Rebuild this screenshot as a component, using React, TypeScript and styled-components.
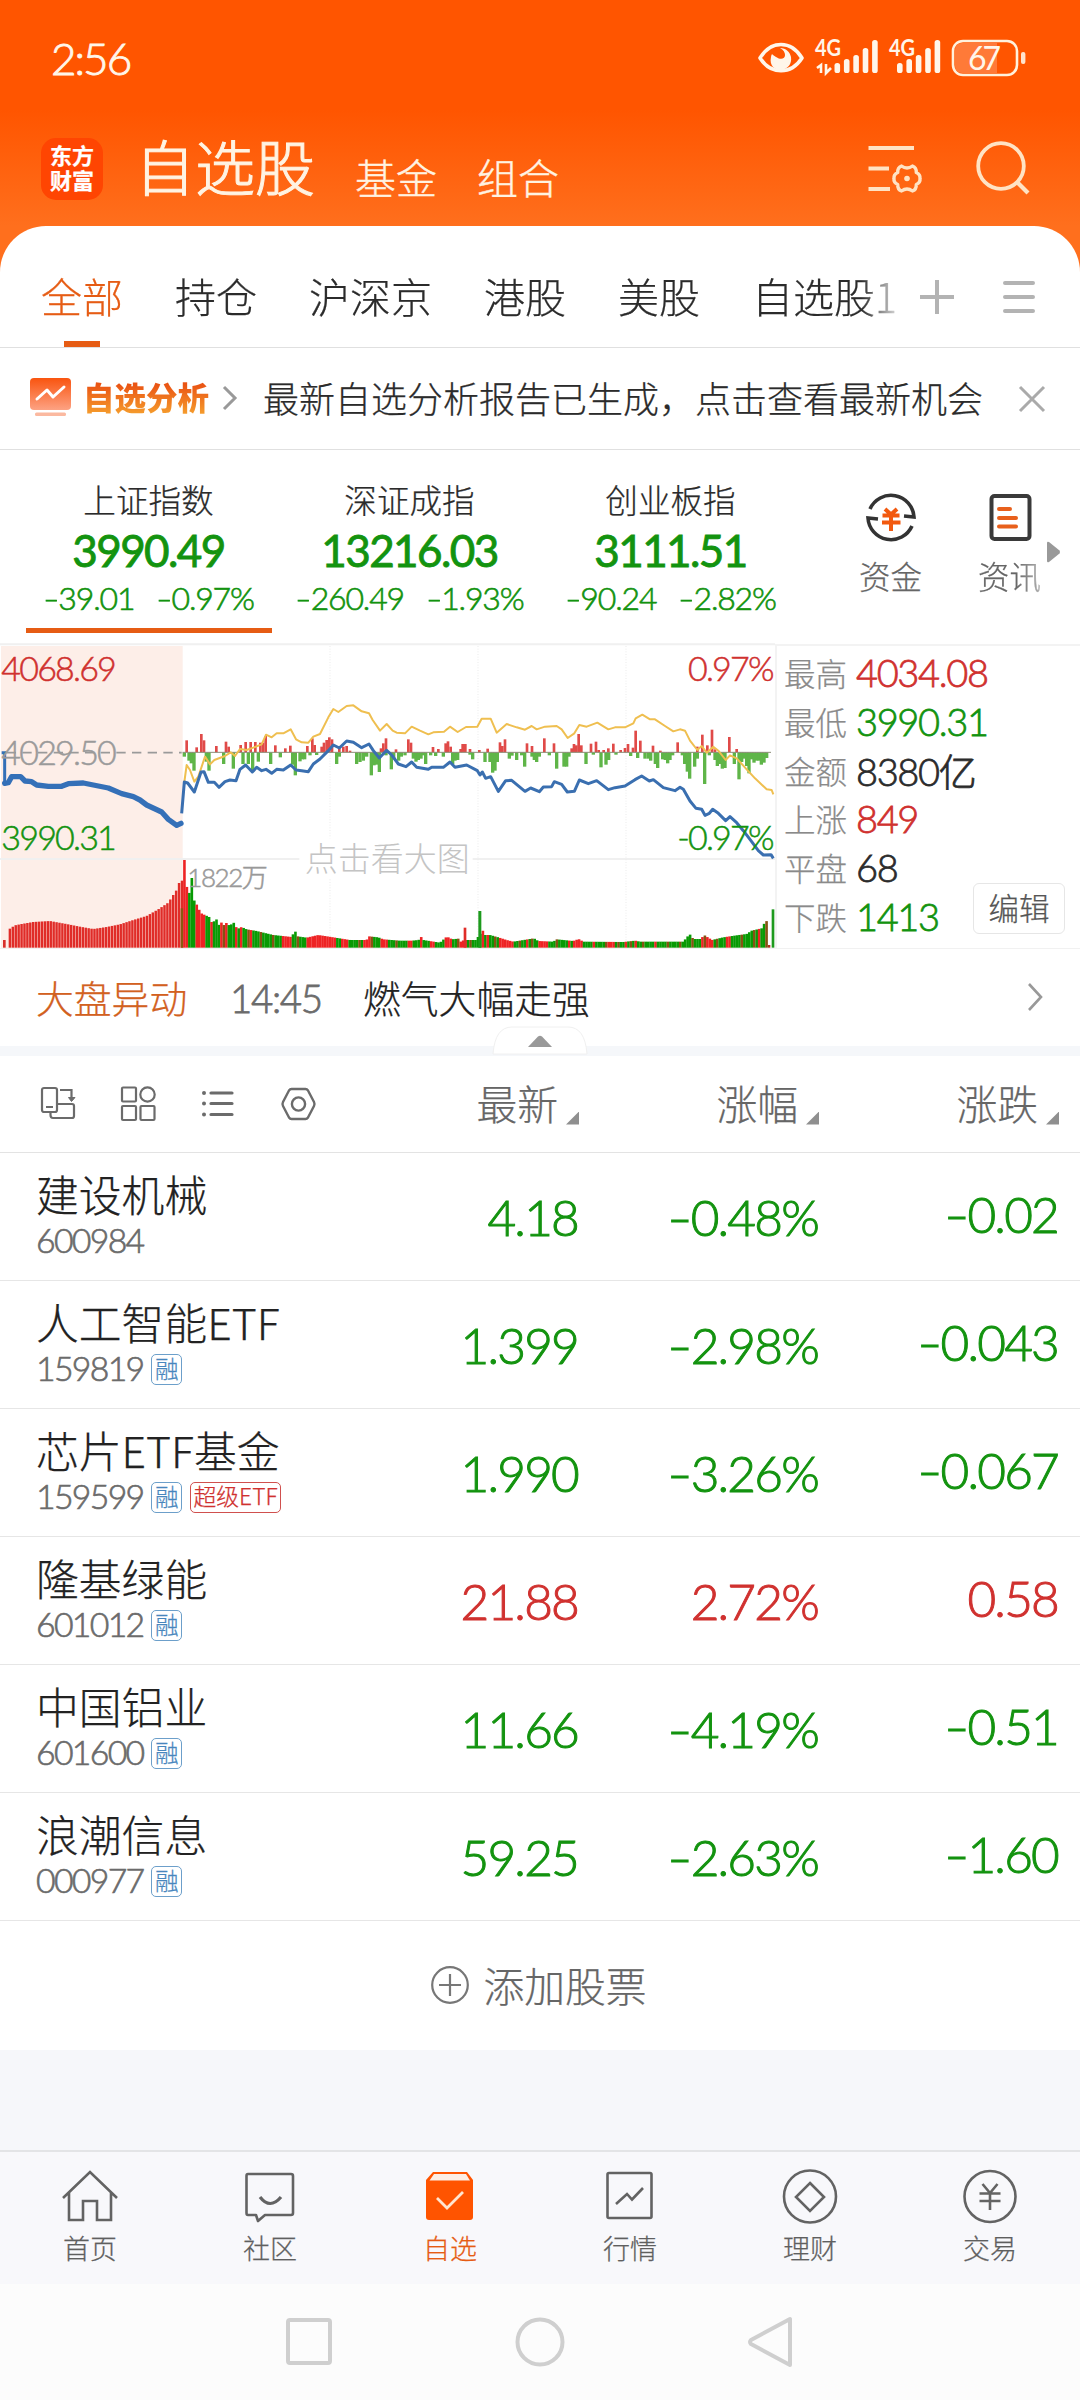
import React from "react";
import styled, { createGlobalStyle } from "styled-components";

const UP = "#d0312f";
const DOWN = "#13930f";
const ORANGE = "#e65c14";

const Global = createGlobalStyle`
  * { box-sizing: border-box; }
  body { margin: 0; background: #fff; }
  svg { display: block; flex: none; overflow: visible; }
`;

const Screen = styled.div`
  width: 1080px;
  height: 2400px;
  overflow: hidden;
  display: flex;
  flex-direction: column;
  background: linear-gradient(180deg, #ff5500 0, #ff5500 110px, #ff6f1d 226px, #ff6f1d 280px);
  font-family: "Noto Sans CJK SC", sans-serif;
  font-weight: 300;
  -webkit-text-stroke: 0.25px;
  color: #2b2b2b;
  white-space: nowrap;
`;

const Num = styled.span<{ $size: number; $color?: string; $bold?: boolean; $track?: number }>`
  font-family: Lato, "Noto Sans CJK SC", sans-serif;
  font-size: ${(p) => p.$size}px;
  font-weight: ${(p) => (p.$bold ? 400 : 300)};
  -webkit-text-stroke: 0.02em;
  letter-spacing: ${(p) => p.$track ?? -0.036}em;
  color: ${(p) => p.$color ?? "inherit"};
`;
const Minus = styled.span`
  display: inline-block;
  transform: scaleX(1.4);
  transform-origin: left;
  margin-right: 0.14em;
`;
const Signed = ({ value }: { value: string }) =>
  value.startsWith("-") ? <><Minus>-</Minus>{value.slice(1)}</> : <>{value}</>;

/* ---------- status bar & header ---------- */
const StatusBar = styled.div`
  height: 116px;
  flex: none;
  padding: 0 54px 0 51px;
  display: flex;
  align-items: center;
  justify-content: space-between;
  color: #fff6ea;
`;
const Header = styled.header`
  height: 110px;
  flex: none;
  padding: 0 48px 0 41px;
  display: flex;
  align-items: center;
  color: #fff3e2;
`;
const Logo = styled.div`
  width: 62px;
  height: 62px;
  margin: -4px 32px 0 0;
  padding-bottom: 4px;
  border-radius: 15px;
  background: #ff4502;
  color: #fff;
  display: flex;
  flex-direction: column;
  align-items: center;
  justify-content: center;
  font-size: 22px;
  line-height: 25px;
  font-weight: 700;
`;
const HeaderTabs = styled.nav`
  display: flex;
  align-items: baseline;
  margin-top: -12px;
  flex: 1;
`;
const HeaderTab = styled.span<{ $active?: boolean }>`
  font-size: ${(p) => (p.$active ? 60 : 41)}px;
  line-height: ${(p) => (p.$active ? 80 : 60)}px;
  font-weight: 300;
  -webkit-text-stroke: ${(p) => (p.$active ? 1 : 0.4)}px;
  margin-right: 40px;
  transform: translateY(${(p) => (p.$active ? 0 : 3)}px);
`;
const HeaderIcons = styled.div`
  display: flex;
  gap: 52px;
  margin-top: -6px;
`;

/* ---------- group tabs ---------- */
const Sheet = styled.main`
  flex: 1;
  display: flex;
  flex-direction: column;
  background: #fff;
  border-radius: 46px 46px 0 0;
  overflow: hidden;
`;
const GroupTabs = styled.div`
  height: 122px;
  flex: none;
  border-bottom: 1px solid #e0e0e0;
  padding: 0 43px 0 41px;
  display: flex;
  align-items: stretch;
`;
const GroupScroller = styled.div`
  width: 855px;
  overflow: hidden;
  display: flex;
  gap: 52px;
  mask-image: linear-gradient(90deg, #000 820px, transparent 864px);
`;
const GroupTab = styled.span<{ $active?: boolean }>`
  font-size: 41px;
  line-height: 138px;
  height: 121px;
  color: ${(p) => (p.$active ? ORANGE : "#2b2b2b")};
  background: ${(p) => (p.$active ? `linear-gradient(${ORANGE}, ${ORANGE}) 50% 100% / 36px 6px no-repeat` : "none")};
`;
const GroupActions = styled.div`
  margin-left: auto;
  display: flex;
  align-items: center;
  gap: 46px;
  padding-top: 20px;
`;

/* ---------- analysis banner ---------- */
const Banner = styled.div`
  height: 102px;
  flex: none;
  border-bottom: 1px solid #e0e0e0;
  padding: 0 33px 2px 29px;
  display: flex;
  align-items: center;
`;
const BannerTitle = styled.span`
  margin: 0 13px 0 12px;
  padding-bottom: 3px;
  font-size: 31.5px;
  line-height: 60px;
  font-weight: 900;
  background: linear-gradient(180deg, #ea5514 30%, #f59a2c 75%);
  -webkit-background-clip: text;
  background-clip: text;
  color: transparent;
  -webkit-text-stroke: 0;
`;
const BannerText = styled.span`
  font-size: 36px;
  line-height: 60px;
  padding-bottom: 2px;
  margin-left: 25px;
  flex: 1;
`;

/* ---------- indices ---------- */
const IndexRow = styled.section`
  height: 194px;
  flex: none;
  display: flex;
  padding-left: 18px;
`;
const IndexCard = styled.div<{ $active?: boolean }>`
  width: 261px;
  padding-top: 26px;
  display: flex;
  flex-direction: column;
  align-items: center;
  background: ${(p) => (p.$active ? `linear-gradient(${ORANGE}, ${ORANGE}) 50% 178px / 246px 5px no-repeat` : "none")};
`;
const IndexName = styled.span`
  font-size: 32.6px;
  line-height: 46px;
`;
const IndexValue = styled.div`
  display: flex;
  line-height: 56px;
  -webkit-text-stroke: 0.03em;
`;
const IndexChange = styled.div`
  display: flex;
  gap: 22px;
  line-height: 40px;
`;
const Shortcuts = styled.div`
  margin-left: 30px;
  display: flex;
  padding-top: 42px;
`;
const Shortcut = styled.div`
  width: 119px;
  display: flex;
  flex-direction: column;
  align-items: center;
  color: #666;
  font-size: 31.5px;
  line-height: 48px;
  gap: 7px;
`;
const Faded = styled.span`
  mask-image: linear-gradient(90deg, #000 60%, rgba(0, 0, 0, 0.5) 100%);
`;
const MoreArrow = styled.div`
  margin: 49px 0 0 -22px;
`;

/* ---------- chart ---------- */
const ChartRow = styled.section`
  height: 305px;
  flex: none;
  display: flex;
  border-bottom: 1px solid #f1f1f1;
`;
const Stats = styled.div`
  flex: 1;
  position: relative;
  border-top: 2px solid #f3f3f3;
  border-left: 2px solid #f3f3f3;
  padding: 2px 0 0 7px;
`;
const StatLine = styled.div`
  height: 48.7px;
  display: flex;
  align-items: center;
  gap: 9px;
`;
const StatLabel = styled.span`
  font-size: 31.5px;
  color: #8a8a8a;
`;
const EditButton = styled.button`
  position: absolute;
  right: 15px;
  top: 237px;
  width: 92px;
  height: 51px;
  padding: 0 0 3px;
  border: 1px solid #e6e6e6;
  border-radius: 6px;
  background: #fff;
  color: #555;
  font: 300 30.5px/44px "Noto Sans CJK SC", sans-serif;
`;
const ChartText = styled.text`
  font-family: Lato, "Noto Sans CJK SC", sans-serif;
  font-weight: 300;
  stroke: currentColor;
  stroke-width: 1.6px;
`;

/* ---------- alert ---------- */
const Alert = styled.section`
  position: relative;
  height: 97px;
  flex: none;
  display: flex;
  align-items: center;
  padding: 0 36px 3px 36px;
  font-size: 37.8px;
  color: #222;
`;
const AlertTag = styled.span`
  color: #d2611f;
  width: 194px;
`;
const AlertTime = styled.span`
  width: 133px;
  color: #6b6b6b;
`;
const AlertText = styled.span`
  flex: 1;
`;
const Collapse = styled.div`
  position: absolute;
  left: 492px;
  top: 77px;
  width: 96px;
  height: 30px;
`;
const Band = styled.div`
  height: 10px;
  flex: none;
  background: #f5f7fa;
`;

/* ---------- watch list ---------- */
const ListHead = styled.div`
  height: 97px;
  flex: none;
  display: grid;
  grid-template-columns: 340px 240px 240px 240px;
  align-items: center;
  border-bottom: 1px solid #e3e3e3;
`;
const Tools = styled.div`
  display: flex;
  gap: 44px;
  padding-left: 40px;
`;
const ColumnTitle = styled.div`
  display: flex;
  justify-content: flex-end;
  align-items: center;
  gap: 8px;
  padding: 0 1px 4px 0;
  font-size: 40.8px;
  color: #666;
`;
const Corner = styled.i`
  width: 13px;
  height: 13px;
  margin-top: 32px;
  background: #8f8f8f;
  clip-path: polygon(100% 0, 100% 100%, 0 100%);
`;
const StockRow = styled.div`
  height: 128px;
  flex: none;
  display: grid;
  grid-template-columns: 340px 240px 240px 240px;
  border-bottom: 1px solid #e6e6e6;
`;
const StockInfo = styled.div`
  padding: 9px 0 0 36px;
`;
const StockName = styled.div`
  font-size: 42.8px;
  line-height: 62px;
  height: 61px;
  color: #222;
`;
const StockCode = styled.div`
  display: flex;
  align-items: center;
  height: 34px;
  gap: 8px;
`;
const Badge = styled.span<{ $red?: boolean }>`
  height: 31px;
  padding: 0 ${(p) => (p.$red ? 2.5 : 2.5)}px;
  border: 1.5px solid ${(p) => (p.$red ? "#d0504e" : "#6c9fca")};
  border-radius: 5px;
  color: ${(p) => (p.$red ? UP : "#4886bd")};
  font-size: ${(p) => (p.$red ? 22.8 : 23.5)}px;
  line-height: 26px;
  margin-top: 2px;
`;
const Cell = styled.div<{ $raise?: number }>`
  text-align: right;
  padding-right: 2px;
  line-height: ${(p) => 129 - (p.$raise ?? 0)}px;
`;
const AddRow = styled.div`
  height: 129px;
  flex: none;
  display: flex;
  align-items: center;
  justify-content: center;
  gap: 14px;
  padding: 0 2px 3px 0;
  font-size: 40.8px;
  color: #666;
`;
const Spacer = styled.div`
  flex: 1;
  background: #f6f7fa;
`;

/* ---------- bottom bars ---------- */
const BottomNav = styled.nav`
  height: 134px;
  flex: none;
  display: flex;
  background: #f8f8fb;
  border-top: 2px solid #e3e4e6;
`;
const NavItem = styled.div<{ $active?: boolean }>`
  flex: 1;
  display: flex;
  flex-direction: column;
  align-items: center;
  padding-top: 15px;
  font-size: 27px;
  line-height: 38px;
  gap: 4px;
  color: ${(p) => (p.$active ? "#e65c14" : "#5f5f5f")};
`;
const SystemBar = styled.div`
  height: 116px;
  flex: none;
  display: flex;
  align-items: center;
  justify-content: center;
  gap: 183px;
  background: #fcfcfc;
`;

/* ---------- data ---------- */
const indices = [
  { name: "上证指数", value: "3990.49", diff: "-39.01", pct: "-0.97%", active: true },
  { name: "深证成指", value: "13216.03", diff: "-260.49", pct: "-1.93%" },
  { name: "创业板指", value: "3111.51", diff: "-90.24", pct: "-2.82%" },
];
const stats: [string, string, string][] = [
  ["最高", "4034.08", UP],
  ["最低", "3990.31", DOWN],
  ["金额", "8380亿", "#2b2b2b"],
  ["上涨", "849", UP],
  ["平盘", "68", "#2b2b2b"],
  ["下跌", "1413", DOWN],
];
const stocks = [
  { name: "建设机械", code: "600984", last: "4.18", pct: "-0.48%", diff: "-0.02", tags: [] },
  { name: "人工智能ETF", code: "159819", last: "1.399", pct: "-2.98%", diff: "-0.043", tags: ["融"] },
  { name: "芯片ETF基金", code: "159599", last: "1.990", pct: "-3.26%", diff: "-0.067", tags: ["融", "超级ETF"] },
  { name: "隆基绿能", code: "601012", last: "21.88", pct: "2.72%", diff: "0.58", tags: ["融"] },
  { name: "中国铝业", code: "601600", last: "11.66", pct: "-4.19%", diff: "-0.51", tags: ["融"] },
  { name: "浪潮信息", code: "000977", last: "59.25", pct: "-2.63%", diff: "-1.60", tags: ["融"] },
];

type Pt = [number, number];
const auction: Pt[] = [[5,368],[14,368],[14,460],[25,458],[35,440],[62,440],[75,453],[95,455],[110,465],[145,469],[185,469],[205,461],[250,459],[280,465],[325,474],[365,491],[400,500],[420,510],[440,525],[485,546],[505,568],[530,586],[543,580]];
const price: Pt[] = [[545,550],[553,456],[563,459],[583,486],[603,426],[612,425],[625,457],[643,457],[657,472],[675,455],[690,450],[708,452],[720,418],[737,405],[757,426],[770,412],[785,422],[798,418],[815,430],[830,418],[850,420],[872,405],[888,420],[905,422],[925,425],[940,402],[960,387],[985,362],[1000,345],[1018,354],[1040,333],[1060,337],[1085,353],[1107,342],[1120,362],[1138,384],[1160,361],[1175,375],[1195,402],[1218,410],[1235,396],[1250,412],[1285,418],[1295,412],[1330,412],[1350,396],[1365,412],[1400,405],[1432,422],[1440,435],[1447,426],[1457,445],[1472,440],[1495,484],[1517,452],[1535,451],[1575,484],[1592,474],[1618,485],[1630,471],[1655,470],[1663,455],[1685,463],[1702,486],[1723,484],[1738,450],[1765,461],[1790,452],[1825,479],[1845,473],[1875,468],[1905,449],[1925,438],[1948,453],[1960,449],[1990,473],[2025,482],[2040,472],[2050,478],[2070,513],[2088,535],[2105,538],[2115,556],[2128,550],[2138,538],[2155,550],[2177,572],[2190,560],[2210,578],[2230,602],[2255,635],[2275,662],[2290,675],[2313,674],[2320,685]];
const average: Pt[] = [[553,456],[560,405],[570,420],[583,455],[595,440],[615,380],[630,403],[643,390],[675,378],[692,367],[705,378],[720,357],[740,360],[760,353],[785,343],[798,314],[815,322],[830,310],[850,310],[872,298],[888,328],[905,337],[925,338],[940,320],[960,312],[985,262],[1000,237],[1015,246],[1040,228],[1060,226],[1085,244],[1107,250],[1118,270],[1140,302],[1160,282],[1178,302],[1190,308],[1215,310],[1235,290],[1260,302],[1285,313],[1300,307],[1332,305],[1350,290],[1373,306],[1398,291],[1432,290],[1445,266],[1472,266],[1490,308],[1520,282],[1550,292],[1575,299],[1595,288],[1610,298],[1635,290],[1670,288],[1685,298],[1703,324],[1723,310],[1738,285],[1760,290],[1792,278],[1825,298],[1845,292],[1875,292],[1900,280],[1907,265],[1927,254],[1950,268],[1965,268],[1995,288],[2020,304],[2040,298],[2055,302],[2070,332],[2092,360],[2105,348],[2120,368],[2140,350],[2155,362],[2177,390],[2190,376],[2210,385],[2240,418],[2265,445],[2300,478],[2315,480],[2320,493]];
const upBars: Pt[] = [[560,331],[590,352],[604,312],[612,331],[649,348],[678,335],[686,350],[722,345],[737,336],[752,336],[766,336],[781,338],[789,338],[797,318],[826,346],[856,355],[871,347],[922,348],[937,325],[944,345],[965,350],[972,338],[980,330],[988,322],[996,328],[1018,355],[1030,350],[1040,348],[1050,362],[1143,355],[1150,340],[1158,325],[1188,358],[1225,328],[1233,338],[1299,351],[1315,357],[1337,340],[1344,334],[1352,350],[1382,357],[1388,342],[1396,342],[1410,357],[1438,360],[1463,356],[1500,337],[1507,348],[1515,328],[1581,340],[1596,348],[1633,325],[1662,340],[1715,355],[1722,342],[1729,346],[1736,312],[1744,346],[1773,341],[1788,335],[1796,360],[1811,360],[1825,355],[1840,341],[1862,360],[1875,354],[1884,342],[1899,353],[1907,302],[1921,332],[1959,347],[1981,362],[2033,337],[2092,350],[2107,314],[2122,346],[2136,299],[2145,358],[2188,321],[2210,357]];
const downBars: Pt[] = [[553,380],[567,392],[574,400],[582,422],[619,395],[627,422],[671,402],[700,416],[729,402],[745,402],[758,426],[775,395],[812,402],[841,382],[878,404],[886,436],[900,394],[907,388],[914,388],[930,376],[950,375],[1010,402],[1018,380],[1070,402],[1080,396],[1090,392],[1100,380],[1114,436],[1122,406],[1130,404],[1138,426],[1158,376],[1174,418],[1181,388],[1196,392],[1204,380],[1215,376],[1240,386],[1248,395],[1255,390],[1263,386],[1270,376],[1277,402],[1292,376],[1307,378],[1330,380],[1358,402],[1365,392],[1373,390],[1410,374],[1418,388],[1455,396],[1470,396],[1478,428],[1485,422],[1492,396],[1528,386],[1536,377],[1550,390],[1565,376],[1574,410],[1596,380],[1603,390],[1610,396],[1618,380],[1648,376],[1670,416],[1692,410],[1700,410],[1707,380],[1758,402],[1780,374],[1803,412],[1818,404],[1826,390],[1848,374],[1892,378],[1913,384],[1935,386],[1945,386],[1952,392],[1966,402],[1973,414],[1988,388],[1996,390],[2003,400],[2010,390],[2018,376],[2047,376],[2054,402],[2062,425],[2069,446],[2084,410],[2092,386],[2114,462],[2128,376],[2145,390],[2152,408],[2160,402],[2167,416],[2175,414],[2203,402],[2217,448],[2225,396],[2232,386],[2240,408],[2247,430],[2255,388],[2262,398],[2270,392],[2277,392],[2284,404],[2292,398],[2300,384]];
const auctionVolume: Pt[] = [[30,896],[45,886],[65,882],[100,876],[150,873],[200,882],[240,890],[280,897],[320,891],[360,883],[400,870],[440,858],[475,838],[505,818],[520,795],[530,780],[540,752]];
const volume: Pt[] = [[545,864],[551,690],[554,690],[560,767],[567,800],[573,744],[576,744],[582,810],[590,823],[597,838],[604,850],[619,857],[627,860],[634,876],[641,876],[648,864],[656,886],[663,876],[671,886],[678,878],[690,888],[700,876],[712,897],[725,891],[740,898],[770,903],[820,915],[876,921],[882,905],[888,905],[893,919],[920,923],[955,915],[1000,922],[1050,930],[1100,930],[1107,919],[1135,922],[1150,928],[1200,932],[1235,932],[1256,930],[1263,920],[1270,930],[1320,938],[1338,922],[1348,922],[1355,928],[1375,926],[1384,937],[1391,930],[1405,930],[1428,930],[1436,918],[1449,902],[1455,915],[1470,915],[1495,922],[1520,930],[1540,935],[1602,925],[1615,933],[1660,935],[1670,928],[1720,933],[1736,927],[1750,935],[1870,936],[1906,932],[1920,935],[2050,935],[2069,912],[2080,927],[2100,927],[2114,916],[2136,930],[2170,922],[2210,916],[2240,912],[2255,902],[2285,895],[2292,882],[2301,872]];
const redRuns: Pt[] = [[548,563],[586,616],[631,639],[660,668],[675,683],[704,712],[718,726],[752,758],[845,874],[920,1004],[1020,1045],[1090,1112],[1140,1166],[1220,1236],[1258,1268],[1290,1306],[1330,1352],[1380,1400],[1445,1452],[1462,1470],[1498,1540],[1580,1588],[1618,1642],[1700,1708],[1715,1748],[1775,1783],[1825,1845],[1875,1884],[1900,1908],[1960,1968],[2100,2108],[2114,2140],[2180,2188],[2272,2280]];

const at = (pts: Pt[], x: number) => {
  for (let i = 1; i < pts.length; i++) {
    if (x <= pts[i][0]) {
      const [x0, y0] = pts[i - 1];
      const [x1, y1] = pts[i];
      return y0 + ((y1 - y0) * (x - x0)) / (x1 - x0);
    }
  }
  return pts[pts.length - 1][1];
};
const line = (pts: Pt[]) => pts.map((p) => p.join(",")).join(" ");
const preBars = Array.from({ length: 60 }, (_, i) => 26 + i * 8.75).filter((x) => x < 545);
const volBars = Array.from({ length: 238 }, (_, i) => 545 + i * 7.4).filter((x) => x < 2305);
const barColor = (x: number, i: number) => {
  if (redRuns.some(([a, b]) => x >= a && x < b)) return "#ee2324";
  if (i === 0) return "#8a5a10";
  return i % 5 === 2 && x > 640 ? "#865213" : "#089a04";
};

function Chart() {
  return (
    <svg width="775" height="305" viewBox="0 42 2325 915">
      <rect x="3" y="48" width="545" height="906" fill="#fdeee8" />
      <g stroke="#f0f0f0" strokeWidth="6">
        <path d="M0 43H2325M0 687H898M1418 687H2325" />
      </g>
      <path d="M990 48V625M990 748V950M1434 48V950M1878 48V950" stroke="#ebebeb" strokeWidth="3" strokeDasharray="3 5" />
      {upBars.map(([x, y]) => <rect key={x} x={x - 4} y={y} width="8" height={367 - y} fill="#e04a48" />)}
      {downBars.map(([x, y]) => <rect key={x} x={x - 5} y={367} width="10" height={y - 367} fill="#5fb548" />)}
      <path d="M548 367H2313" stroke="#8c8c78" strokeWidth="3" />
      <rect x="9" y="930" width="8" height="23" fill="#d8302c" />
      {preBars.map((x) => {
        const y = at(auctionVolume, x + 4);
        return <rect key={x} x={x} y={y} width="7.4" height={953 - y} fill="#e02c28" />;
      })}
      {volBars.map((x, i) => {
        const y = at(volume, x + 1);
        return <rect key={x} x={x - 3} y={y} width="7.8" height={953 - y} fill={barColor(x, i)} />;
      })}
      <rect x="1391" y="893" width="8" height="60" fill="#e02c28" />
      <rect x="1435" y="843" width="9" height="110" fill="#1d9a1d" />
      <rect x="2304" y="945" width="7" height="8" fill="#b03020" />
      <rect x="2315" y="838" width="8" height="115" fill="#1d9a1d" />
      <path d="M20 368H545" stroke="#9a9a9a" strokeWidth="5" strokeDasharray="28 19" />
      <polyline points={line(average)} fill="none" stroke="#efbf50" strokeWidth="6" strokeLinejoin="round" />
      <polyline points={line(price)} fill="none" stroke="#3a6fb0" strokeWidth="9" strokeLinejoin="round" />
      <polyline points={line(auction.slice(2))} fill="none" stroke="#3470b8" strokeWidth="16" strokeLinejoin="round" strokeLinecap="round" />
      <polyline points={line(auction.slice(0, 3))} fill="none" stroke="#3470b8" strokeWidth="9" />
      <g fontSize="102" letterSpacing="-5.4">
        <ChartText x="4" y="153" fill={UP} color={UP}>4068.69</ChartText>
        <ChartText x="4" y="404" fill="#9a9a9a" color="#9a9a9a">4029.50</ChartText>
        <ChartText x="4" y="659" fill={DOWN} color={DOWN}>3990.31</ChartText>
        <ChartText x="2318" y="153" fill={UP} color={UP} textAnchor="end">0.97%</ChartText>
        <ChartText x="2318" y="659" fill={DOWN} color={DOWN} textAnchor="end">-0.97%</ChartText>
      </g>
      <ChartText x="562" y="771" fill="#999" color="#999" fontSize="78" letterSpacing="-4.4">1822万</ChartText>
      <text x="914" y="724" fill="#c4c4c4" fontSize="99">点击看大图</text>
    </svg>
  );
}

const Signal = ({ x, n }: { x: number; n: number }) => (
  <g fill="#fff6ea">
    {Array.from({ length: n }, (_, i) => {
      const h = [10, 14, 18, 25, 33][i];
      return <rect key={i} x={x + i * 9.4} y={33 - h} width="5.6" height={h} rx="2.6" />;
    })}
  </g>
);

const StatusIcons = () => (
  <svg width="268" height="38" viewBox="0 0 268 38" fill="none">
    <g transform="translate(0 1)">
      <path d="M2 18C13 0 33 0 44 18C33 35 13 35 2 18Z" stroke="#fff6ea" strokeWidth="3.6" strokeLinejoin="round" />
      <path d="M22 8C31 13 27 23 18 17C14 15 14 12 13 17C11 26 17 30 23 30C30 29 34 24 33 17C32 12 28 8 22 8Z" fill="#fff6ea" />
      <text x="57" y="16" fill="#fff6ea" fontFamily="Lato" fontWeight="700" fontSize="22" textLength="26" lengthAdjust="spacingAndGlyphs">4G</text>
      <path d="M59 28L63 25V33M68 24V33L73 28" stroke="#fff6ea" strokeWidth="2.6" />
      <Signal x={76.5} n={5} />
      <text x="131" y="16" fill="#fff6ea" fontFamily="Lato" fontWeight="700" fontSize="22" textLength="26" lengthAdjust="spacingAndGlyphs">4G</text>
      <Signal x={139} n={5} />
    </g>
    <rect x="195" y="2" width="64" height="34" rx="10" fill="#ff5500" stroke="#fff1dc" strokeWidth="2.6" />
    <path d="M204 4H239V34H204Q197 34 197 27V11Q197 4 204 4Z" fill="#ff7a38" />
    <rect x="263" y="13" width="4.4" height="12" rx="2" fill="#ffe3cc" />
    <text x="210" y="30.500" fill="#fff6ea" fontFamily="Lato" fontWeight="400" fontSize="32" textLength="33">67</text>
  </svg>
);

export default function App() {
  return (
    <Screen>
      <Global />
      <StatusBar>
        <Num $size={44} $track={-0.045}>2:56</Num>
        <StatusIcons />
      </StatusBar>
      <Header>
        <Logo><span>东方</span><span>财富</span></Logo>
        <HeaderTabs>
          <HeaderTab $active>自选股</HeaderTab>
          <HeaderTab>基金</HeaderTab>
          <HeaderTab>组合</HeaderTab>
        </HeaderTabs>
        <HeaderIcons>
          <svg width="56" height="56" viewBox="0 0 56 56" fill="none" stroke="#ffe3c4" strokeWidth="3.8">
            <path d="M0.500 8H46M0.500 28.500H21M0.500 49H22" />
            <g transform="translate(39 38.500)">
              <path d="M-5.500 -12.500Q0 -8.500 5.500 -12.500Q9.500 -11 9.300 -6Q13.500 -4 13 0Q13.500 4 9.300 6Q9.500 11 5.500 12.500Q0 8.500 -5.500 12.500Q-9.500 11 -9.300 6Q-13.500 4 -13 0Q-13.500 -4 -9.300 -6Q-9.500 -11 -5.500 -12.500Z" strokeWidth="3.400" strokeLinejoin="round" />
              <circle r="2.800" fill="#ffe3c4" stroke="none" />
            </g>
          </svg>
          <svg width="56" height="56" viewBox="0 0 56 56" fill="none" stroke="#ffe3c4" strokeWidth="3.800">
            <circle cx="25" cy="26" r="22.800" />
            <path d="M41 42L52 53" strokeWidth="4.200" />
          </svg>
        </HeaderIcons>
      </Header>

      <Sheet>
        <GroupTabs>
          <GroupScroller>
            <GroupTab $active>全部</GroupTab>
            <GroupTab>持仓</GroupTab>
            <GroupTab>沪深京</GroupTab>
            <GroupTab>港股</GroupTab>
            <GroupTab>美股</GroupTab>
            <GroupTab>自选股1</GroupTab>
          </GroupScroller>
          <GroupActions>
            <svg width="36" height="36" stroke="#b3b3b3" strokeWidth="4"><path d="M18 1V35M1 18H35" /></svg>
            <svg width="36" height="36" stroke="#b3b3b3" strokeWidth="4" strokeLinecap="round"><path d="M4 4H32M4 18H32M4 32H32" /></svg>
          </GroupActions>
        </GroupTabs>

        <Banner>
          <svg width="42" height="40" viewBox="0 0 42 40">
            <defs>
              <linearGradient id="tile" x1="0" y1="0" x2="0" y2="1">
                <stop offset="0" stopColor="#f9540f" />
                <stop offset="1" stopColor="#fda283" />
              </linearGradient>
            </defs>
            <rect x="1" y="0" width="41" height="32" rx="4" fill="url(#tile)" />
            <path d="M8 21L18 12L24 19L35 9" stroke="#fff" strokeWidth="3" fill="none" strokeLinecap="round" strokeLinejoin="round" />
            <rect x="6" y="34.500" width="31" height="3.500" rx="1.500" fill="#fbb9a0" />
          </svg>
          <BannerTitle>自选分析</BannerTitle>
          <svg width="16" height="24" fill="none" stroke="#999" strokeWidth="3"><path d="M2 1L13 12L2 23" /></svg>
          <BannerText>最新自选分析报告已生成，点击查看最新机会</BannerText>
          <svg width="30" height="30" stroke="#aaa" strokeWidth="3"><path d="M3 4L27 28M27 4L3 28" /></svg>
        </Banner>

        <IndexRow>
          {indices.map((it) => (
            <IndexCard key={it.name} $active={it.active}>
              <IndexName>{it.name}</IndexName>
              <IndexValue><Num $size={44} $bold $color={DOWN}>{it.value}</Num></IndexValue>
              <IndexChange>
                <Num $size={32} $color={DOWN}><Signed value={it.diff} /></Num>
                <Num $size={32} $color={DOWN}><Signed value={it.pct} /></Num>
              </IndexChange>
            </IndexCard>
          ))}
          <Shortcuts>
            <Shortcut>
              <svg width="52" height="52" viewBox="0 0 52 52" fill="none" stroke="#333" strokeWidth="3.600">
                <path d="M5 17A23 23 0 0 1 49 25L39 24M47 34A23 23 0 0 1 3 26L13 27" strokeLinejoin="miter" />
                <path d="M20 17L26 22.500L32 17M17.500 23.500H34.500M17 30.500H35.500M26 23V39" stroke="#f2590f" strokeWidth="4" />
              </svg>
              <span>资金</span>
            </Shortcut>
            <Shortcut>
              <svg width="52" height="52" viewBox="0 0 52 52" fill="none">
                <rect x="7.500" y="4" width="38" height="43" rx="3" stroke="#3a3a3a" strokeWidth="4" />
                <path d="M15 17H26M15 26H32M15 34.500H32" stroke="#e8601c" strokeWidth="4" strokeLinecap="round" />
              </svg>
              <Faded>资讯</Faded>
            </Shortcut>
            <MoreArrow>
              <svg width="14" height="22"><path d="M0 2Q0 0 2 1L12.500 9.500Q13.500 11 12.500 12.500L2 21Q0 22 0 20Z" fill="#999" /></svg>
            </MoreArrow>
          </Shortcuts>
        </IndexRow>

        <ChartRow>
          <Chart />
          <Stats>
            {stats.map(([label, value, color]) => (
              <StatLine key={label}>
                <StatLabel>{label}</StatLabel>
                <Num $size={38} $color={color}>{value}</Num>
              </StatLine>
            ))}
            <EditButton>编辑</EditButton>
          </Stats>
        </ChartRow>

        <Alert>
          <AlertTag>大盘异动</AlertTag>
          <AlertTime><Num $size={38.5}>14:45</Num></AlertTime>
          <AlertText>燃气大幅走强</AlertText>
          <svg width="18" height="30" fill="none" stroke="#999" strokeWidth="2.600"><path d="M3 3L15 16L3 29" /></svg>
          <Collapse>
            <svg width="96" height="30">
              <path d="M1 28Q3 1 20 1H76Q93 1 95 28Z" fill="#fff" stroke="#f0f0f0" />
              <path d="M36 21L46 10.500Q48 9 50 10.500L60 21Z" fill="#999" />
            </svg>
          </Collapse>
        </Alert>
        <Band />

        <ListHead>
          <Tools>
            <svg width="36" height="36" viewBox="0 0 36 36" fill="none" stroke="#6b6b6b" strokeWidth="2.200">
              <rect x="2" y="2" width="15" height="24" rx="2" />
              <path d="M6 21H13M20 4H31.500V13M10.500 26V29Q10.500 32 13 32H32Q34 32 34 30V20Q34 18 32 18H17" />
              <path d="M28.500 11.500H35L31.500 15.500Z" fill="#6b6b6b" strokeWidth="1" />
            </svg>
            <svg width="36" height="36" viewBox="0 0 36 36" fill="none" stroke="#6b6b6b" strokeWidth="2.200">
              <rect x="2" y="1.500" width="14" height="14" rx="1" />
              <circle cx="27.500" cy="8.500" r="7.200" />
              <rect x="2" y="20" width="14" height="14" rx="1" />
              <rect x="20.500" y="20" width="14" height="14" rx="1" />
            </svg>
            <svg width="36" height="36" viewBox="0 0 36 36" stroke="#6b6b6b" strokeWidth="3.200" strokeLinecap="round">
              <path d="M11 7H32M11 17.500H32M11 28.500H32" />
              <path d="M4 7V7M4 17.500V17.500M4 28.500V28.500" strokeWidth="4" />
            </svg>
            <svg width="36" height="36" viewBox="0 0 36 36" fill="none" stroke="#6b6b6b" strokeWidth="2.400" strokeLinejoin="round">
              <path d="M11.500 3H25.500Q27 3 28 4.500L34 16Q35 18 34 20L28 31.500Q27 33 25.500 33H11.500Q10 33 9 31.500L3 20Q2 18 3 16L9 4.500Q10 3 11.500 3Z" />
              <circle cx="18.500" cy="18" r="6.600" />
            </svg>
          </Tools>
          <ColumnTitle>最新<Corner /></ColumnTitle>
          <ColumnTitle>涨幅<Corner /></ColumnTitle>
          <ColumnTitle>涨跌<Corner /></ColumnTitle>
        </ListHead>

        {stocks.map((s) => {
          const color = s.pct.startsWith("-") ? DOWN : UP;
          return (
            <StockRow key={s.code}>
              <StockInfo>
                <StockName>{s.name}</StockName>
                <StockCode>
                  <Num $size={33.8} $color="#6b6b6b" $track={-0.05}>{s.code}</Num>
                  {s.tags.map((t) => <Badge key={t} $red={t !== "融"}>{t}</Badge>)}
                </StockCode>
              </StockInfo>
              <Cell><Num $size={49.5} $color={color}>{s.last}</Num></Cell>
              <Cell><Num $size={49.5} $color={color}><Signed value={s.pct} /></Num></Cell>
              <Cell $raise={6}><Num $size={49.5} $color={color}><Signed value={s.diff} /></Num></Cell>
            </StockRow>
          );
        })}

        <AddRow>
          <svg width="38" height="38" fill="none" stroke="#777" strokeWidth="2.200">
            <circle cx="19" cy="20" r="17.800" />
            <path d="M19 9V31M8 20H30" />
          </svg>
          添加股票
        </AddRow>
        <Spacer />

        <BottomNav>
          <NavItem>
            <svg width="60" height="58" viewBox="0 0 60 58" fill="none" stroke="#636363" strokeWidth="2.600">
              <path d="M3 31L30 5L57 31M9 26V53H23V34H37V53H51V26" />
            </svg>
            首页
          </NavItem>
          <NavItem>
            <svg width="60" height="58" viewBox="0 0 60 58" fill="none" stroke="#636363" strokeWidth="2.600" strokeLinejoin="round">
              <path d="M8 7H51Q53 7 53 9V46Q53 48 51 48H25L18 54L16 48H8Q6.500 48 6.500 46V9Q6.500 7 8 7Z" />
              <path d="M20 30Q30 43 41 30" strokeWidth="3.200" />
            </svg>
            社区
          </NavItem>
          <NavItem $active>
            <svg width="60" height="58" viewBox="0 0 60 58" fill="none">
              <path d="M13 5H47L53 13V50Q53 53 50 53H9Q6 53 6 50V13Z" fill="#ff5400" />
              <path d="M14 7H46L50 13.500H9.500Z" fill="#fdeee4" />
              <path d="M17 31L27 41L43 25" stroke="#ffe6d0" strokeWidth="2.800" />
            </svg>
            自选
          </NavItem>
          <NavItem>
            <svg width="60" height="58" viewBox="0 0 60 58" fill="none" stroke="#636363" strokeWidth="2.600">
              <rect x="7.500" y="6" width="44" height="45" rx="1.500" />
              <path d="M16 37L27 27L32 32.500L43 21" />
            </svg>
            行情
          </NavItem>
          <NavItem>
            <svg width="60" height="58" viewBox="0 0 60 58" fill="none" stroke="#636363" strokeWidth="2.600">
              <circle cx="30" cy="29.500" r="26" />
              <path d="M30 16L44 30L30 44L16 30Z" />
            </svg>
            理财
          </NavItem>
          <NavItem>
            <svg width="60" height="58" viewBox="0 0 60 58" fill="none" stroke="#636363" strokeWidth="2.600">
              <circle cx="30" cy="29.500" r="25.500" />
              <path d="M22.500 17L30 26L37.500 17M19.500 26.500H40.500M19.500 34H40.500M30 26V43" />
            </svg>
            交易
          </NavItem>
        </BottomNav>
        <SystemBar>
          <svg width="46" height="48" fill="none" stroke="#cfcfcf" strokeWidth="4"><rect x="2" y="2" width="42" height="43" rx="2" /></svg>
          <svg width="50" height="50" fill="none" stroke="#cfcfcf" strokeWidth="4"><circle cx="25" cy="25" r="22.500" /></svg>
          <svg width="46" height="52" fill="none" stroke="#cfcfcf" strokeWidth="4" strokeLinejoin="round"><path d="M42 3V49L3 28Q1 26 3 24Z" /></svg>
        </SystemBar>
      </Sheet>
    </Screen>
  );
}
